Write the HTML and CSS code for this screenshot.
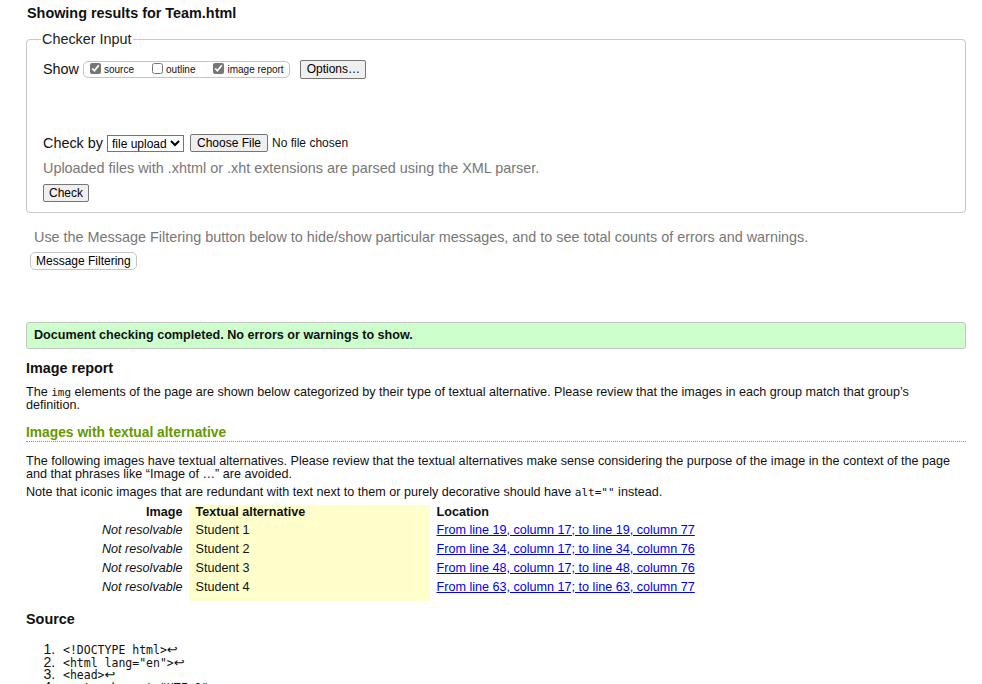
FILE: index.html
```html
<!DOCTYPE html>
<html lang="en">
<head>
<meta charset="utf-8">
<title>Showing results for Team.html</title>
<link rel="stylesheet" href="styles.css">
</head>
<body>
<div class="page">
  <h1 class="title">Showing results for Team.html</h1>
  <fieldset class="checker">
    <legend class="legend">Checker Input</legend>
    <div class="show-row">
      <span class="show-label">Show</span>
      <span class="show-group">
        <label class="opt"><input type="checkbox" class="cb" checked> source</label>
        <label class="opt"><input type="checkbox" class="cb"> outline</label>
        <label class="opt"><input type="checkbox" class="cb" checked> image report</label>
      </span>
      <button class="btn btn-options" type="button">Options…</button>
    </div>
    <div class="spacer"></div>
    <div class="checkby-row">
      <span class="checkby-label">Check by</span>
      <select class="sel"><option>file upload</option></select>
      <button class="btn btn-file" type="button">Choose File</button>
      <span class="nofile">No file chosen</span>
    </div>
    <p class="hint">Uploaded files with .xhtml or .xht extensions are parsed using the XML parser.</p>
    <button class="btn btn-check" type="button">Check</button>
  </fieldset>
  <p class="filter-hint">Use the Message Filtering button below to hide/show particular messages, and to see total counts of errors and warnings.</p>
  <button class="btn-filter" type="button">Message Filtering</button>

  <div class="success">Document checking completed. No errors or warnings to show.</div>

  <h2 class="section">Image report</h2>
  <p class="para para-intro">The <code class="code">img</code> elements of the page are shown below categorized by their type of textual alternative. Please review that the images in each group match that group’s definition.</p>
  <h3 class="subsection">Images with textual alternative</h3>
  <p class="para para-follow">The following images have textual alternatives. Please review that the textual alternatives make sense considering the purpose of the image in the context of the page and that phrases like “Image of …” are avoided.</p>
  <p class="para note">Note that iconic images that are redundant with text next to them or purely decorative should have <code class="code">alt=""</code> instead.</p>
  <table class="imgs">
    <thead>
      <tr><th class="c-img">Image</th><th class="c-alt">Textual alternative</th><th class="c-loc">Location</th></tr>
    </thead>
    <tbody>
      <tr><td class="c-img">Not resolvable</td><td class="c-alt">Student 1</td><td class="c-loc"><a href="#l19">From line 19, column 17; to line 19, column 77</a></td></tr>
      <tr><td class="c-img">Not resolvable</td><td class="c-alt">Student 2</td><td class="c-loc"><a href="#l34">From line 34, column 17; to line 34, column 76</a></td></tr>
      <tr><td class="c-img">Not resolvable</td><td class="c-alt">Student 3</td><td class="c-loc"><a href="#l48">From line 48, column 17; to line 48, column 76</a></td></tr>
      <tr><td class="c-img">Not resolvable</td><td class="c-alt">Student 4</td><td class="c-loc"><a href="#l63">From line 63, column 17; to line 63, column 77</a></td></tr>
    </tbody>
  </table>

  <h2 class="section source-h">Source</h2>
  <ol class="source">
    <li><code>&lt;!DOCTYPE html&gt;<span class="ret">↩</span></code></li>
    <li><code>&lt;html lang="en"&gt;<span class="ret">↩</span></code></li>
    <li><code>&lt;head&gt;<span class="ret">↩</span></code></li>
    <li><code>&lt;meta charset="UTF-8"&gt;<span class="ret">↩</span></code></li>
  </ol>
</div>
</body>
</html>
```
FILE: styles.css
```css
html, body {
  margin: 0;
  padding: 0;
  background: #fff;
}
body {
  font-family: "Liberation Sans", Arial, sans-serif;
  color: #111;
  overflow: hidden;
}
.page {
  padding: 0 16px 0 26px;
}
.title {
  font-size: 14.4px;
  font-weight: bold;
  margin: 0;
  padding-top: 5px;
  line-height: 16px;
  padding-left: 1px;
}
.checker {
  margin: 10px 0 0 0;
  border: 1px solid #c8c8c8;
  border-radius: 4px;
  padding: 8px 16px 10px 16px;
}
.legend {
  font-size: 14.4px;
  color: #222;
  padding: 0 1px;
  margin-left: -2px;
}
.show-row {
  display: flex;
  align-items: center;
  margin-top: 4px;
  height: 20px;
}
.show-label {
  font-size: 14.4px;
  margin-right: 4px;
}
.show-group {
  display: inline-flex;
  align-items: center;
  border: 1px solid #c4c4c4;
  border-radius: 5px;
  height: 15px;
  padding: 0 5px 0 6px;
}
.opt {
  font-size: 10px;
  display: inline-flex;
  align-items: center;
  margin-right: 18px;
}
.opt:last-child { margin-right: 0; }
.cb {
  width: 11px;
  height: 11px;
  margin: 0 3px 2px 0;
  accent-color: #767676;
}
.btn {
  font-family: "Liberation Sans", Arial, sans-serif;
  font-size: 12px;
  background: #efefef;
  border: 1px solid #767676;
  border-radius: 2px;
  padding: 0 6px;
  height: 19px;
  color: #000;
  line-height: 16px;
}
.btn-options {
  margin-left: 10px;
  width: 66px;
}
.spacer { height: 54px; }
.checkby-row {
  display: flex;
  align-items: center;
  height: 20px;
}
.checkby-label {
  font-size: 14.4px;
  margin-right: 4px;
}
.sel {
  font-family: "Liberation Sans", Arial, sans-serif;
  font-size: 12px;
  height: 17px;
  border: 1px solid #767676;
  border-radius: 0;
  padding: 0;
  color: #000;
  background: #fff;
}
.btn-file {
  margin-left: 6px;
  height: 18px;
}
.nofile {
  font-size: 12px;
  margin-left: 4px;
}
.hint {
  font-size: 14.4px;
  color: #777;
  margin: 7px 0 7px 0;
  line-height: 16px;
}
.btn-check {
  height: 18px;
  padding: 0 5px;
}
.filter-hint {
  font-size: 14.4px;
  color: #777;
  margin: 16px 0 6px 8px;
  line-height: 16px;
}
.btn-filter {
  font-family: "Liberation Sans", Arial, sans-serif;
  font-size: 12px;
  background: #fff;
  border: 1px solid #c4c4c4;
  border-radius: 5px;
  height: 18px;
  padding: 0 5px;
  margin-left: 4px;
  color: #000;
}
.success {
  margin-top: 52px;
  background: #ccffcc;
  border: 1px solid #c4c4c4;
  border-radius: 3px;
  font-size: 12.6px;
  font-weight: bold;
  padding: 5px 7px;
  line-height: 15px;
}
.section {
  font-size: 14.4px;
  font-weight: bold;
  margin: 11px 0 0 0;
  line-height: 16px;
}
.para {
  font-size: 12.6px;
  line-height: 13px;
  margin: 10px 0 0 0;
}
.para-intro {
  padding-right: 24px;
}
.para-follow {
  margin-top: 13px;
}
.code {
  font-family: "DejaVu Sans Mono", "Liberation Mono", monospace;
  font-size: 11px;
  line-height: 10px;
}
.subsection {
  font-size: 13.8px;
  font-weight: bold;
  color: #669900;
  margin: 13px 0 0 0;
  line-height: 15px;
  border-bottom: 1px dotted #999966;
  padding-bottom: 1px;
}
.note {
  margin-top: 5px;
}
.imgs {
  border-collapse: collapse;
  margin: 6px 0 0 70px;
  font-size: 12.6px;
}
.imgs th, .imgs td {
  padding: 0 6px 0 6px;
  height: 19px;
  line-height: 15px;
  vertical-align: middle;
  white-space: nowrap;
}
.imgs thead th { height: 15px; padding-top: 0; }
.imgs .c-img {
  text-align: right;
  font-style: italic;
  width: 80px;
}
.imgs th.c-img { font-style: normal; }
.imgs th { font-weight: bold; text-align: left; }
.imgs .c-alt {
  background: #ffffcc;
  width: 228px;
  padding-left: 7px;
}
.imgs .c-loc { padding-left: 7px; }
.imgs tbody tr:first-child td { height: 20px; }
.imgs tbody tr:last-child td { height: 21px; vertical-align: top; padding-top: 2px; }
.imgs a {
  color: #0000ee;
}
.source-h {
  margin-top: 10px;
}
.source {
  margin: 16px 0 0 0;
  padding-left: 33px;
  font-size: 14px;
  line-height: 12.5px;
}
.source li { padding-left: 4px; line-height: 12.5px; height: 12.5px; }
.source code {
  font-family: "DejaVu Sans Mono", "Liberation Mono", monospace;
  font-size: 11.5px;
  line-height: 12.5px;
}
.ret { font-family: "DejaVu Sans", sans-serif; font-size: 13px; }
```
